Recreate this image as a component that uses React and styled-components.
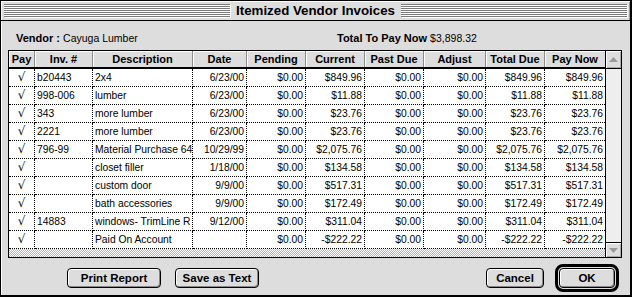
import styled, { createGlobalStyle } from "styled-components";

const GlobalStyle = createGlobalStyle`
  html, body {
    margin: 0;
    padding: 0;
    background: #ffffff;
  }
  * {
    box-sizing: border-box;
  }
`;

// column widths, each one includes its own right border
const COLS = "26px 58px 100px 54px 59px 59px 59px 62px 59px 60px";

const columns = [
  { title: "Pay", align: "center" },
  { title: "Inv. #", align: "left" },
  { title: "Description", align: "left" },
  { title: "Date", align: "right" },
  { title: "Pending", align: "right" },
  { title: "Current", align: "right" },
  { title: "Past Due", align: "right" },
  { title: "Adjust", align: "right" },
  { title: "Total Due", align: "right" },
  { title: "Pay Now", align: "right" },
];

const invoices = [
  ["b20443", "2x4", "6/23/00", "$0.00", "$849.96", "$0.00", "$0.00", "$849.96", "$849.96"],
  ["998-006", "lumber", "6/23/00", "$0.00", "$11.88", "$0.00", "$0.00", "$11.88", "$11.88"],
  ["343", "more lumber", "6/23/00", "$0.00", "$23.76", "$0.00", "$0.00", "$23.76", "$23.76"],
  ["2221", "more lumber", "6/23/00", "$0.00", "$23.76", "$0.00", "$0.00", "$23.76", "$23.76"],
  ["796-99", "Material Purchase 64", "10/29/99", "$0.00", "$2,075.76", "$0.00", "$0.00", "$2,075.76", "$2,075.76"],
  ["", "closet filler", "1/18/00", "$0.00", "$134.58", "$0.00", "$0.00", "$134.58", "$134.58"],
  ["", "custom door", "9/9/00", "$0.00", "$517.31", "$0.00", "$0.00", "$517.31", "$517.31"],
  ["", "bath accessories", "9/9/00", "$0.00", "$172.49", "$0.00", "$0.00", "$172.49", "$172.49"],
  ["14883", "windows- TrimLine R", "9/12/00", "$0.00", "$311.04", "$0.00", "$0.00", "$311.04", "$311.04"],
  ["", "Paid On Account", "", "$0.00", "-$222.22", "$0.00", "$0.00", "-$222.22", "-$222.22"],
];

export default function App() {
  return (
    <>
      <GlobalStyle />
      <StyledWindow>
        <StyledTitleBar>
          <StyledStripes />
          <StyledTitle>Itemized Vendor Invoices</StyledTitle>
          <StyledStripes />
        </StyledTitleBar>

        <StyledContent>
          <StyledInfoRow>
            <StyledField>
              <StyledLabel>Vendor : </StyledLabel>
              <StyledValue>Cayuga Lumber</StyledValue>
            </StyledField>
            <StyledField>
              <StyledLabel>Total To Pay Now </StyledLabel>
              <StyledValue>$3,898.32</StyledValue>
            </StyledField>
          </StyledInfoRow>

          <StyledTable>
            <StyledGridArea>
              <StyledHeaderRow>
                {columns.map((col) => (
                  <StyledHeaderCell key={col.title}>{col.title}</StyledHeaderCell>
                ))}
              </StyledHeaderRow>
              {invoices.map((row, i) => (
                <StyledRow key={i}>
                  <StyledCheckCell>√</StyledCheckCell>
                  {row.map((value, j) => (
                    <StyledCell
                      key={j}
                      align={columns[j + 1].align}
                      last={j === row.length - 1}
                    >
                      {value}
                    </StyledCell>
                  ))}
                </StyledRow>
              ))}
              <StyledFiller />
            </StyledGridArea>

            <StyledScrollbar>
              <StyledArrowBox variant="up">
                <svg width="9" height="5" viewBox="0 0 9 5">
                  <polygon points="4.5,0 9,5 0,5" fill="#9a9a9a" />
                </svg>
              </StyledArrowBox>
              <StyledTrack />
              <StyledArrowBox variant="down">
                <svg width="9" height="5" viewBox="0 0 9 5">
                  <polygon points="0,0 9,0 4.5,5" fill="#9a9a9a" />
                </svg>
              </StyledArrowBox>
            </StyledScrollbar>
          </StyledTable>

          <StyledButtonBar>
            <StyledButtonGroup>
              <StyledButton width={94}>Print Report</StyledButton>
              <StyledButton width={84}>Save as Text</StyledButton>
            </StyledButtonGroup>
            <StyledButtonGroup gap={11}>
              <StyledButton width={58}>Cancel</StyledButton>
              <StyledDefaultRing>
                <StyledButton width={56}>OK</StyledButton>
              </StyledDefaultRing>
            </StyledButtonGroup>
          </StyledButtonBar>
        </StyledContent>
      </StyledWindow>
    </>
  );
}

const StyledWindow = styled.div`
  width: 632px;
  height: 297px;
  display: flex;
  flex-direction: column;
  background: #dddddd;
  border-top: 1px solid #000;
  border-left: 1px solid #000;
  border-right: 2px solid #000;
  border-bottom: 2px solid #000;
  font-family: "Liberation Sans", Arial, sans-serif;
  color: #000;
`;

const StyledTitleBar = styled.div`
  height: 20px;
  flex: 0 0 20px;
  display: flex;
  align-items: center;
  padding: 0 3px;
  background: #dddddd;
  border-bottom: 1px solid #000;
  box-shadow: inset 1px 1px 0 #ffffff, inset -1px 0 0 #999999;
`;

const StyledStripes = styled.div`
  flex: 1;
  height: 13px;
  background: repeating-linear-gradient(
    to bottom,
    #7a7a7a 0px,
    #7a7a7a 1px,
    #ffffff 1px,
    #ffffff 2px
  );
  box-shadow: 1px 1px 0 #ffffff;
`;

const StyledTitle = styled.div`
  padding: 0 6px;
  font-size: 13.3px;
  font-weight: bold;
  line-height: 18px;
  white-space: nowrap;
`;

const StyledContent = styled.div`
  flex: 1;
  display: flex;
  flex-direction: column;
  padding: 0 8px 0 7px;
  box-shadow: inset 1px 0 0 #ffffff;
`;

const StyledInfoRow = styled.div`
  display: grid;
  grid-template-columns: 321px 1fr;
  height: 14px;
  margin-top: 10px;
  margin-bottom: 5px;
  padding-left: 8px;
  align-items: center;
  white-space: nowrap;
`;

const StyledField = styled.div`
  font-size: 10px;
  line-height: 14px;
`;

const StyledLabel = styled.span`
  font-weight: bold;
  font-size: 11px;
`;

const StyledValue = styled.span`
  font-size: 10.5px;
`;

const StyledTable = styled.div`
  height: 208px;
  width: 614px;
  display: flex;
  border: 1px solid #000;
  background: #ffffff;
`;

const StyledGridArea = styled.div`
  width: 596px;
  display: flex;
  flex-direction: column;
`;

const StyledHeaderRow = styled.div`
  display: grid;
  grid-template-columns: ${COLS};
  height: 18px;
  border-bottom: 2px solid #000;
  background: #dddddd;
`;

const StyledHeaderCell = styled.div`
  height: 16px;
  line-height: 16px;
  text-align: center;
  font-size: 11px;
  font-weight: bold;
  white-space: nowrap;
  overflow: hidden;
  border-right: 1px solid #8a8a8a;
  box-shadow: inset 1px 1px 0 #ffffff;

  &:last-child {
    border-right: none;
  }
`;

const StyledRow = styled.div`
  display: grid;
  grid-template-columns: ${COLS};
  height: 18px;
`;

const StyledCell = styled.div`
  height: 18px;
  line-height: 17px;
  padding: ${(props) => (props.align === "left" ? "0 0 0 2px" : "0 2px 0 0")};
  font-size: 10.3px;
  white-space: nowrap;
  overflow: hidden;
  text-align: ${(props) => props.align};
  border-bottom: 1px dotted #000;
  border-right: ${(props) => (props.last ? "none" : "1px dotted #000")};
`;

const StyledCheckCell = styled(StyledCell)`
  text-align: center;
  padding: 0;
  font-size: 12px;
  font-family: "DejaVu Sans", sans-serif;
`;

const StyledFiller = styled.div`
  flex: 1;
  background: repeating-conic-gradient(#b8b8b8 0% 25%, #ffffff 0% 50%) 0 0 / 2px
    2px;
`;

const StyledScrollbar = styled.div`
  width: 16px;
  display: flex;
  flex-direction: column;
  border-left: 1px solid #000;
  background: #eeeeee;
`;

const StyledArrowBox = styled.div`
  height: ${(props) => (props.variant === "up" ? "18px" : "15px")};
  display: flex;
  align-items: center;
  justify-content: center;
  background: #dddddd;
  box-shadow: inset 1px 1px 0 #ffffff, inset -1px -1px 0 #aaaaaa;
  border-bottom: ${(props) =>
    props.variant === "up" ? "1px solid #000" : "none"};
  border-top: ${(props) =>
    props.variant === "down" ? "1px solid #000" : "none"};
`;

const StyledTrack = styled.div`
  flex: 1;
  background: #eeeeee;
`;

const StyledButtonBar = styled.div`
  display: flex;
  justify-content: space-between;
  align-items: center;
  margin-top: 6px;
  height: 28px;
  padding: 0 3px 0 59px;
`;

const StyledButtonGroup = styled.div`
  display: flex;
  align-items: center;
  gap: ${(props) => props.gap ?? 14}px;
`;

const StyledButton = styled.button`
  width: ${(props) => props.width}px;
  height: 20px;
  padding: 0;
  border: 1px solid #000;
  border-radius: 4px;
  background: #dddddd;
  box-shadow: inset 1px 1px 0 #ffffff, inset -1px -1px 0 #888888;
  font-family: "Liberation Sans", Arial, sans-serif;
  font-size: 11.5px;
  font-weight: bold;
  color: #000;
  line-height: 18px;
  cursor: pointer;
  &:active {
    background: #555555;
    color: #ffffff;
  }
`;

const StyledDefaultRing = styled.div`
  display: flex;
  padding: 1px;
  border: 3px solid #000;
  border-radius: 8px;
  background: #dddddd;
`;
